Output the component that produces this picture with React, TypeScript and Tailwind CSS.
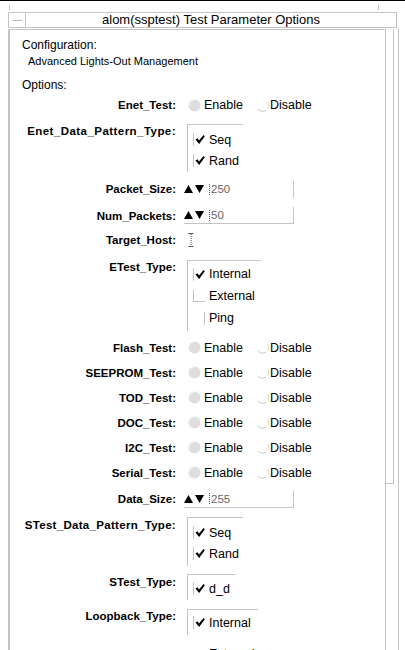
import React from "react";

type CB = "checked" | "empty" | "right";

function Check() {
  return (
    <svg width="11" height="11" viewBox="0 0 11 11" className="block">
      <path d="M0.5 5.6 L2.8 4 L4.4 6.6 L9.4 0.5 L10.8 1.8 L4.6 10.4 Z" fill="#000" />
    </svg>
  );
}

function CheckBox({ state }: { state: CB }) {
  if (state === "checked") {
    return (
      <div className="w-[12px] h-[13px] border-l border-[#c4c4c4] flex items-center pl-[1px]">
        <Check />
      </div>
    );
  }
  if (state === "empty") {
    return <div className="w-[12px] h-[12px] border-l border-b border-[#c4c4c4]" />;
  }
  return <div className="w-[12px] h-[13px] border-r border-[#c4c4c4]" />;
}

function CheckItem({ state, text }: { state: CB; text: string }) {
  return (
    <div className="h-[21px] flex items-center pl-[5px]">
      <CheckBox state={state} />
      <span className="ml-[4px] text-[12.5px] leading-[16px] text-black">{text}</span>
    </div>
  );
}

function RadioFilled() {
  return (
    <svg width="13" height="13" viewBox="0 0 13 13" className="block">
      <circle cx="6.5" cy="6.5" r="6" fill="#dedede" />
      <path d="M1.2 6.5 A5.3 5.3 0 0 1 6.5 1.2" fill="none" stroke="#f2f2f2" strokeWidth="1" />
    </svg>
  );
}

function RadioOpen() {
  return (
    <svg width="13" height="13" viewBox="0 0 13 13" className="block">
      <path d="M2 10 A6 6 0 0 0 10 11.2" fill="none" stroke="#c8c8c8" strokeWidth="1" />
      <path d="M11.5 3 A6 6 0 0 1 11.8 9.5" fill="none" stroke="#d4d4d4" strokeWidth="1" />
    </svg>
  );
}

function Label({ children, cls }: { children: React.ReactNode; cls?: string }) {
  return (
    <div className={"w-[166px] shrink-0 text-right font-bold text-[11.5px] leading-[16px] text-black whitespace-nowrap " + (cls ?? "")}>
      {children}
    </div>
  );
}

function RadioRow({ label }: { label: string }) {
  return (
    <div className="h-[25px] flex items-center">
      <Label>{label}</Label>
      <div className="ml-[12px] flex items-center">
        <RadioFilled />
        <span className="ml-[3px] text-[12.5px] leading-[16px] text-black">Enable</span>
        <div className="ml-[13px]">
          <RadioOpen />
        </div>
        <span className="ml-[1px] text-[12.5px] leading-[16px] text-black">Disable</span>
      </div>
    </div>
  );
}

function Arrows() {
  return (
    <svg width="22" height="10" viewBox="0 0 22 10" className="block">
      <polygon points="0,9 4.5,1 9,9" fill="#000" />
      <polygon points="11,1 20,1 15.5,9" fill="#000" />
    </svg>
  );
}

function Spin({ value, bottom }: { value: string; bottom: boolean }) {
  return (
    <div
      className={
        "ml-[8px] w-[110px] h-[17px] flex items-center border-r border-[#c4c4c4] " +
        (bottom ? "border-b" : "")
      }
    >
      <Arrows />
      <div className="ml-[3px] w-px h-[11px] border-l border-dotted border-[#555]" />
      <span className="ml-[1px] text-[11.5px] leading-[14px] text-[#666]">{value}</span>
    </div>
  );
}

function IBeam() {
  return (
    <svg width="6" height="14" viewBox="0 0 6 14" className="block">
      <path d="M0.5 0.5 H5.5 M0.5 13.5 H5.5" stroke="#555" strokeWidth="1" />
      <path d="M3 1 V13" stroke="#444" strokeWidth="1" strokeDasharray="1 1" />
    </svg>
  );
}

export default function App() {
  return (
    <div
      className="w-[405px] h-[650px] overflow-hidden bg-white relative"
      style={{ fontFamily: '"Liberation Sans", Arial, sans-serif' }}
    >
      <div className="h-px bg-black" />
      <div className="h-[11px] flex">
        <div className="ml-[9px] mt-[4px] w-px h-[5px] bg-[#c4c4c4]" />
        <div className="ml-[368px] mt-[4px] w-px h-[5px] bg-[#c4c4c4]" />
      </div>
      {/* Title bar */}
      <div className="ml-[8px] w-[389px] h-[16px] border border-[#c4c4c4] flex">
        <div className="w-[17px] border-r border-[#c4c4c4] flex items-center justify-center">
          <div className="w-[9px] h-px bg-[#b8b8b8]" />
        </div>
        <div className="flex-1 text-center text-[13px] leading-[14px] text-black">
          alom(ssptest) Test Parameter Options
        </div>
      </div>
      {/* Main */}
      <div className="mt-px flex h-[621px]">
        <div className="ml-[8px] w-[377px] shrink-0 border-l-2 border-t border-[#c4c4c4]">
          <div className="mt-[7px] h-[16px] pl-[12px] text-[12px] leading-[16px] text-black">Configuration:</div>
          <div className="h-[16px] pl-[18px] text-[11px] leading-[16px] text-black">Advanced Lights-Out Management</div>
          <div className="mt-[8px] h-[16px] pl-[12px] text-[12px] leading-[16px] text-black">Options:</div>

          <div className="h-[24px] flex items-center">
            <Label>Enet_Test:</Label>
            <div className="ml-[12px] flex items-center">
              <RadioFilled />
              <span className="ml-[3px] text-[12.5px] leading-[16px] text-black">Enable</span>
              <div className="ml-[13px]">
                <RadioOpen />
              </div>
              <span className="ml-[1px] text-[12.5px] leading-[16px] text-black">Disable</span>
            </div>
          </div>

          <div className="h-[60px] flex items-start">
            <Label cls="pt-[6px] tracking-[0.45px]">Enet_Data_Pattern_Type:</Label>
            <div className="ml-[11px] mt-[7px] w-[56px] border-t border-l border-[#c4c4c4] pt-[4px] pb-[1px]">
              <CheckItem state="checked" text="Seq" />
              <CheckItem state="checked" text="Rand" />
            </div>
          </div>

          <div className="h-[24px] flex items-center">
            <Label>Packet_Size:</Label>
            <Spin value="250" bottom={false} />
          </div>

          <div className="h-[29px] flex items-center">
            <Label>Num_Packets:</Label>
            <Spin value="50" bottom={true} />
          </div>

          <div className="h-[20px] flex items-center">
            <Label>Target_Host:</Label>
            <div className="ml-[12px]">
              <IBeam />
            </div>
          </div>

          <div className="h-[85px] flex items-start">
            <Label cls="pt-[9px]">ETest_Type:</Label>
            <div className="ml-[11px] mt-[10px] w-[74px] border-t border-l border-[#c4c4c4] pt-[2px] pb-[2px]">
              <div className="h-[22px] flex items-center pl-[5px]">
                <CheckBox state="checked" />
                <span className="ml-[4px] text-[12.5px] leading-[16px] text-black">Internal</span>
              </div>
              <div className="h-[22px] flex items-center pl-[5px]">
                <CheckBox state="empty" />
                <span className="ml-[4px] text-[12.5px] leading-[16px] text-black">External</span>
              </div>
              <div className="h-[22px] flex items-center pl-[5px]">
                <CheckBox state="right" />
                <span className="ml-[4px] text-[12.5px] leading-[16px] text-black">Ping</span>
              </div>
            </div>
          </div>

          <RadioRow label="Flash_Test:" />
          <RadioRow label="SEEPROM_Test:" />
          <RadioRow label="TOD_Test:" />
          <RadioRow label="DOC_Test:" />
          <RadioRow label="I2C_Test:" />
          <RadioRow label="Serial_Test:" />

          <div className="h-[28px] flex items-center">
            <Label>Data_Size:</Label>
            <Spin value="255" bottom={true} />
          </div>

          <div className="h-[55px] flex items-start">
            <Label cls="pt-[4px] tracking-[0.3px]">STest_Data_Pattern_Type:</Label>
            <div className="ml-[11px] mt-[4px] w-[56px] border-t border-l border-[#c4c4c4] pt-[4px] pb-[2px]">
              <CheckItem state="checked" text="Seq" />
              <CheckItem state="checked" text="Rand" />
            </div>
          </div>

          <div className="h-[35px] flex items-start">
            <Label cls="pt-[6px]">STest_Type:</Label>
            <div className="ml-[11px] mt-[6px] w-[48px] border-t border-l border-[#c4c4c4] pt-[3px] pb-[1px]">
              <CheckItem state="checked" text="d_d" />
            </div>
          </div>

          <div className="h-[60px] flex items-start">
            <Label cls="pt-[5px]">Loopback_Type:</Label>
            <div className="ml-[11px] mt-[6px] w-[71px]">
              <div className="border-t border-l border-[#c4c4c4] pt-[2px] pb-[2px]">
                <CheckItem state="checked" text="Internal" />
              </div>
              <div className="mt-[11px] pl-[22px] text-[12.5px] leading-[16px] text-black">External</div>
            </div>
          </div>
        </div>

        {/* Scrollbar */}
        <div className="w-[14px] shrink-0 border-l border-r border-[#c4c4c4]">
          <div className="w-[8px] h-[455px] border-r border-b border-[#c4c4c4]" />
        </div>
      </div>
    </div>
  );
}
